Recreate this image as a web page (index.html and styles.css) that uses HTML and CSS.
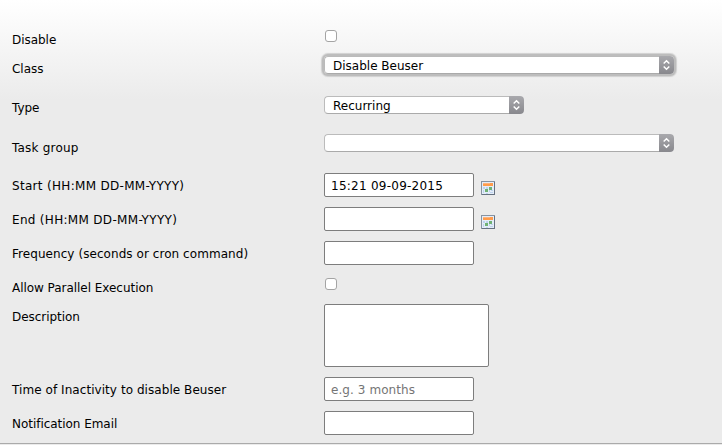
FILE: index.html
```html
<!DOCTYPE html>
<html lang="en">
<head>
<meta charset="utf-8">
<title>Scheduler task</title>
<link rel="stylesheet" href="styles.css">
</head>
<body>
<svg class="defs" width="0" height="0">
  <symbol id="arrows" viewBox="0 0 15 18"><path d="M4.7 7.5 7.5 4.8 10.3 7.5M4.7 10.5 7.5 13.2 10.3 10.5" fill="none" stroke="#fff" stroke-width="1.5"/></symbol>
  <symbol id="calendar" viewBox="0 0 14 14">
    <path fill="#8793a2" d="M0 0h14v14H0z"/><path fill="#667180" d="M13 1h1v13H1v-1h12z"/>
    <path fill="#e4edf8" d="M1 1h12v12H1z"/><path fill="#ff9c4c" d="M2 2h10v3H2z"/><path fill="#ffb37a" d="M2 2h7v1H2z"/>
    <path fill="#bed3ee" d="M2 6h2v2H2zM5 6h2v2H5zM2 9h1v2H2zM8 9h1v2H8zM10 9h2v1h-2zM2 11h1v1H2zM5 12h2v1H5zM9 11h3v1H9z"/>
    <path fill="#70b276" d="M8 6h3v3H8zM4 8h3v3H4z"/>
  </symbol>
</svg>
<form class="form">
  <div class="row short"><label for="disable">Disable</label><input class="check" id="disable" type="checkbox"></div>
  <div class="row class-row"><label for="class">Class</label><div class="select wide focused"><select id="class"><option>Disable Beuser</option></select><span class="arrow"><svg><use href="#arrows"/></svg></span></div></div>
  <div class="row type-row"><label for="type">Type</label><div class="select"><select id="type"><option>Recurring</option></select><span class="arrow"><svg><use href="#arrows"/></svg></span></div></div>
  <div class="row group-row"><label class="semi" for="group">Task group</label><div class="select wide"><select id="group"><option></option></select><span class="arrow"><svg><use href="#arrows"/></svg></span></div></div>
  <div class="row"><label class="loose" for="start">Start (HH:MM DD-MM-YYYY)</label><input class="field date" id="start" type="text" value="15:21 09-09-2015"><svg class="calendar"><use href="#calendar"/></svg></div>
  <div class="row"><label class="loose" for="end">End (HH:MM DD-MM-YYYY)</label><input class="field date" id="end" type="text"><svg class="calendar"><use href="#calendar"/></svg></div>
  <div class="row"><label class="long" for="frequency">Frequency (seconds or cron command)</label><input class="field" id="frequency" type="text"></div>
  <div class="row short"><label for="parallel">Allow Parallel Execution</label><input class="check" id="parallel" type="checkbox"></div>
  <div class="row description-row"><label for="description">Description</label><textarea id="description"></textarea></div>
  <div class="row"><label class="long" for="inactivity">Time of Inactivity to disable Beuser</label><input class="field" id="inactivity" type="text" placeholder="e.g. 3 months"></div>
  <div class="row"><label for="email">Notification Email</label><input class="field" id="email" type="text"></div>
</form>
</body>
</html>
```
FILE: styles.css
```css
* { box-sizing: border-box; }
body {
  margin: 0;
  height: 445px;
  overflow: hidden;
  background: #ebebeb linear-gradient(#fff, #ebebeb 100px) no-repeat;
  color: #000;
  font: 12px/18px Verdana, "DejaVu Sans", sans-serif;
}
.defs { display: none; }
.form { height: 444px; padding: 25px 0 0 12px; border-bottom: 1px solid #aaa; }
.row { display: flex; align-items: flex-start; height: 34px; padding-top: 2px; }
.row.short { height: 29px; }
.row.class-row { height: 39px; }
.row.type-row { height: 40px; }
.row.group-row { height: 38px; }
.row.description-row { height: 73px; }
label { width: 312px; padding-top: 4px; white-space: nowrap; letter-spacing: -0.04px; }
label.semi { letter-spacing: 0.2px; }
label.long { letter-spacing: 0.06px; }
label.loose { letter-spacing: 0.31px; }
input, select, textarea { margin: 0; font: inherit; color: #000; outline: 0; }
.check {
  appearance: none;
  width: 12px;
  height: 12px;
  margin: 3px 0 0 1px;
  border: 1px solid #a4a4a4;
  border-radius: 3px;
  background: #fff;
}
.select {
  display: flex;
  width: 200px;
  height: 18px;
  border-radius: 4px;
  background: #fff;
}
.type-row .select { margin-top: 1px; }
.group-row .select { margin-top: -1px; }
.select.wide { width: 350px; }
.focused { box-shadow: 0 0 0 2px #bdbdbd, 0 0 1px 3px #d0d0d0; }
select {
  appearance: none;
  flex: 1;
  height: 18px;
  padding: 2px 8px 0;
  border: 1px solid #bbb;
  border-bottom-color: #aaa;
  border-right: 0;
  border-radius: 4px 0 0 4px;
  background: #fff;
  line-height: 14px;
}
.arrow { width: 15px; height: 18px; border-radius: 0 4px 4px 0; background: linear-gradient(#a9a9ad, #88888d); }
.arrow svg { display: block; width: 15px; height: 18px; }
.field {
  width: 150px;
  height: 24px;
  padding: 1px 6px 0;
  border: 1px solid #7d7d7d;
  border-radius: 2px;
  background: #fff;
  letter-spacing: 0.07px;
}
.date { letter-spacing: 0.25px; }
::placeholder { color: #757575; opacity: 1; }
textarea { width: 165px; height: 63px; border: 1px solid #7d7d7d; border-radius: 2px; background: #fff; resize: none; }
.calendar { width: 14px; height: 14px; margin: 8px 0 0 7px; }
```
